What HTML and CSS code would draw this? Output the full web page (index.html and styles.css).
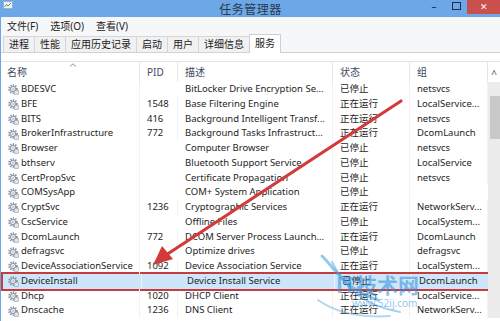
FILE: index.html
```html
<!DOCTYPE html>
<html lang="zh-CN">
<head>
  <meta charset="UTF-8">
  <title>任务管理器</title>
  <link rel="stylesheet" href="styles.css">
</head>
<body>
  <svg class="defs" width="0" height="0">
    <symbol id="gear" viewBox="0 0 12 12">
      <circle cx="6" cy="6" r="3.7" fill="none" stroke="#8b939c" stroke-width="2.2" stroke-dasharray="1.3 1.1"/>
      <circle cx="6" cy="6" r="2.6" fill="#eef1f4" stroke="#78818b" stroke-width="0.8"/>
      <circle cx="6" cy="6" r="1" fill="#a7c4dc"/>
      <rect x="7.5" y="7.5" width="4" height="4" fill="#dce6ef" stroke="#8aa2b8" stroke-width="0.6"/>
    </symbol>
  </svg>

  <div class="window">
    <div class="titlebar">
      <svg class="appicon" viewBox="0 0 10 8">
        <rect x="0.5" y="0.5" width="9" height="7" fill="#e9f1fa" stroke="#9bb3cc"/>
        <polyline points="1.5,6 3.5,3.5 5,5 8,2" fill="none" stroke="#4f8a3c" stroke-width="0.9"/>
      </svg>
      <span class="title">任务管理器</span>
      <div class="controls">
        <span class="ctl">–</span>
        <span class="ctl box"></span>
        <span class="close">✕</span>
      </div>
    </div>

    <div class="menubar">
      <span>文件(F)</span>
      <span>选项(O)</span>
      <span>查看(V)</span>
    </div>

    <div class="tabs">
      <span class="tab">进程</span>
      <span class="tab">性能</span>
      <span class="tab">应用历史记录</span>
      <span class="tab">启动</span>
      <span class="tab">用户</span>
      <span class="tab">详细信息</span>
      <span class="tab active">服务</span>
    </div>

    <div class="panel">
      <div class="list">
        <div class="row head">
          <span class="c name">名称<svg class="sort" viewBox="0 0 8 4"><polyline points="1,3.5 4,0.8 7,3.5" fill="none" stroke="#8d97a3" stroke-width="1"/></svg></span>
          <span class="c">PID</span>
          <span class="c">描述</span>
          <span class="c">状态</span>
          <span class="c">组</span>
        </div>
        <div class="row"><span class="c name"><svg class="ico"><use href="#gear"/></svg>BDESVC</span><span class="c"></span><span class="c">BitLocker Drive Encryption Se...</span><span class="c">已停止</span><span class="c">netsvcs</span></div>
        <div class="row"><span class="c name"><svg class="ico"><use href="#gear"/></svg>BFE</span><span class="c">1548</span><span class="c">Base Filtering Engine</span><span class="c">正在运行</span><span class="c">LocalService...</span></div>
        <div class="row"><span class="c name"><svg class="ico"><use href="#gear"/></svg>BITS</span><span class="c">416</span><span class="c">Background Intelligent Transf...</span><span class="c">正在运行</span><span class="c">netsvcs</span></div>
        <div class="row"><span class="c name"><svg class="ico"><use href="#gear"/></svg>BrokerInfrastructure</span><span class="c">772</span><span class="c">Background Tasks Infrastruct...</span><span class="c">正在运行</span><span class="c">DcomLaunch</span></div>
        <div class="row"><span class="c name"><svg class="ico"><use href="#gear"/></svg>Browser</span><span class="c"></span><span class="c">Computer Browser</span><span class="c">已停止</span><span class="c">netsvcs</span></div>
        <div class="row"><span class="c name"><svg class="ico"><use href="#gear"/></svg>bthserv</span><span class="c"></span><span class="c">Bluetooth Support Service</span><span class="c">已停止</span><span class="c">LocalService</span></div>
        <div class="row"><span class="c name"><svg class="ico"><use href="#gear"/></svg>CertPropSvc</span><span class="c"></span><span class="c">Certificate Propagation</span><span class="c">已停止</span><span class="c">netsvcs</span></div>
        <div class="row"><span class="c name"><svg class="ico"><use href="#gear"/></svg>COMSysApp</span><span class="c"></span><span class="c">COM+ System Application</span><span class="c">已停止</span><span class="c"></span></div>
        <div class="row"><span class="c name"><svg class="ico"><use href="#gear"/></svg>CryptSvc</span><span class="c">1236</span><span class="c">Cryptographic Services</span><span class="c">正在运行</span><span class="c">NetworkServ...</span></div>
        <div class="row"><span class="c name"><svg class="ico"><use href="#gear"/></svg>CscService</span><span class="c"></span><span class="c">Offline Files</span><span class="c">已停止</span><span class="c">LocalSystem...</span></div>
        <div class="row"><span class="c name"><svg class="ico"><use href="#gear"/></svg>DcomLaunch</span><span class="c">772</span><span class="c">DCOM Server Process Launch...</span><span class="c">正在运行</span><span class="c">DcomLaunch</span></div>
        <div class="row"><span class="c name"><svg class="ico"><use href="#gear"/></svg>defragsvc</span><span class="c"></span><span class="c">Optimize drives</span><span class="c">已停止</span><span class="c">defragsvc</span></div>
        <div class="row"><span class="c name"><svg class="ico"><use href="#gear"/></svg>DeviceAssociationService</span><span class="c">1092</span><span class="c">Device Association Service</span><span class="c">正在运行</span><span class="c">LocalSystem...</span></div>
        <div class="row selected"><span class="c name"><svg class="ico"><use href="#gear"/></svg>DeviceInstall</span><span class="c"></span><span class="c">Device Install Service</span><span class="c">已停止</span><span class="c">DcomLaunch</span></div>
        <div class="row"><span class="c name"><svg class="ico"><use href="#gear"/></svg>Dhcp</span><span class="c">1020</span><span class="c">DHCP Client</span><span class="c">正在运行</span><span class="c">LocalService...</span></div>
        <div class="row"><span class="c name"><svg class="ico"><use href="#gear"/></svg>Dnscache</span><span class="c">1236</span><span class="c">DNS Client</span><span class="c">正在运行</span><span class="c">NetworkServ...</span></div>
      </div>
      <div class="scrollbar">
        <span class="up">^</span>
        <div class="track"><div class="thumb"></div></div>
      </div>
    </div>

    <!-- red arrow + site watermark drawn over the list -->
    <svg class="overlay" viewBox="0 0 500 321">
      <line x1="401" y1="101" x2="166" y2="255" stroke="#d23a3c" stroke-width="3.2" stroke-linecap="round"/>
      <polygon points="153,265 162,246 173,259" fill="#d23a3c"/>
      <g class="mark" fill="none" stroke="#3d9be0" stroke-linecap="round">
        <path d="M322 256 C338 272 346 290 378 300" stroke-width="3" opacity="0.55"/>
        <path d="M332 262 C344 285 360 305 400 312" stroke-width="2" opacity="0.45"/>
        <path d="M318 300 C335 312 360 318 390 316" stroke-width="2" opacity="0.4"/>
      </g>
      <text x="336" y="293" class="mark-title">IT技术网</text>
      <text x="352" y="307" class="mark-url">www.52ij.com</text>
    </svg>
  </div>
</body>
</html>
```

FILE: styles.css
```css
html, body {
  margin: 0;
  padding: 0;
}

body {
  width: 500px;
  height: 321px;
  overflow: hidden;
  background: #ffffff;
  font-family: "Noto Sans", "Noto Sans CJK SC", sans-serif;
  font-size: 10px;
  color: #1e1e1e;
}

.defs {
  position: absolute;
}

.window {
  position: relative;
  height: 321px;
  border-left: 1px solid #6ea7e6;
  box-sizing: border-box;
}

/* title bar */
.titlebar {
  height: 17px;
  background: #6ca8e8;
  display: grid;
  grid-template-columns: 1fr auto 1fr;
  align-items: center;
}

.appicon {
  width: 10px;
  height: 8px;
  margin-left: 2px;
  align-self: start;
  margin-top: 1px;
}

.title {
  font-family: "Noto Sans CJK SC", sans-serif;
  font-size: 12px;
  color: #2b3a4a;
  letter-spacing: 0.5px;
  line-height: 17px;
}

.controls {
  justify-self: end;
  display: flex;
  align-items: flex-start;
  height: 17px;
}

.ctl {
  width: 22px;
  text-align: center;
  color: #1f2f40;
  font-size: 10px;
  line-height: 12px;
}

.ctl.box::before {
  content: "";
  display: inline-block;
  width: 7px;
  height: 6px;
  border: 1px solid #1f2f40;
  margin-top: 2px;
}

.close {
  width: 33px;
  height: 14px;
  background: #c9504c;
  color: #ffffff;
  text-align: center;
  font-size: 9px;
  line-height: 14px;
}

/* menu */
.menubar {
  height: 16px;
  background: #f6f7f8;
  display: flex;
  gap: 12px;
  padding-left: 6px;
  align-items: center;
  color: #222222;
}

/* tabs */
.tabs {
  height: 19px;
  display: flex;
  align-items: flex-end;
  padding-left: 2px;
  background: #f6f7f8;
  border-bottom: 1px solid #d2d2d2;
}

.tab {
  height: 15px;
  line-height: 15px;
  padding: 0 5px;
  background: #f1f1f1;
  border: 1px solid #d6d6d6;
  border-bottom: none;
  margin-right: -1px;
  color: #222222;
}

.tab.active {
  height: 18px;
  line-height: 17px;
  background: #ffffff;
  margin-bottom: -1px;
  border-color: #cfcfcf;
}

/* service list */
.panel {
  display: flex;
  padding-top: 8px;
  background: #ffffff;
}

.list {
  width: 487px;
  font-size: 9.5px;
}

.row {
  display: grid;
  grid-template-columns: 139px 38px 155px 77px 78px;
  height: 14.75px;
  align-items: center;
}

.row.head {
  height: 21px;
  border-top: 1px solid #e3e3e3;
  box-sizing: border-box;
  color: #3c4a5c;
  font-size: 10px;
}

.row.head .c {
  height: 20px;
  line-height: 20px;
  border-right: 1px solid #e6e6e6;
}

.c {
  padding-left: 7px;
  white-space: nowrap;
  overflow: hidden;
  line-height: 14.75px;
  border-right: 1px solid #f2f2f2;
}

.c.name {
  padding-left: 6px;
  display: flex;
  align-items: center;
  position: relative;
}

.row.head .c.name {
  display: block;
  overflow: visible;
}

.sort {
  position: absolute;
  left: 68px;
  top: 1px;
  width: 8px;
  height: 4px;
}

.ico {
  width: 12px;
  height: 12px;
  margin-right: 2px;
  flex: none;
}

.row.selected {
  background: #cde6fb;
  outline: 2px solid #c63b3e;
  outline-offset: 0;
  margin-left: 2px;
  margin-right: -3px;
}

.row.selected .c.name {
  padding-left: 4px;
}

/* scrollbar */
.scrollbar {
  width: 13px;
  display: flex;
  flex-direction: column;
}

.up {
  height: 21px;
  line-height: 24px;
  text-align: center;
  font-size: 10px;
  color: #555555;
  border-top: 1px solid #e3e3e3;
  box-sizing: border-box;
}

.track {
  flex: 1;
  background: #ececec;
  padding-top: 14px;
}

.thumb {
  margin-left: 2px;
  height: 43px;
  background: #c9c9c9;
}

/* overlay */
.overlay {
  position: absolute;
  left: -1px;
  top: 0;
  width: 500px;
  height: 321px;
  pointer-events: none;
}

.mark-title {
  font-family: "Noto Sans CJK SC", sans-serif;
  font-size: 21px;
  font-weight: 700;
  fill: #2f8fdc;
  opacity: 0.55;
}

.mark-url {
  font-family: "Noto Sans", sans-serif;
  font-size: 10px;
  fill: #4aa3e6;
  opacity: 0.6;
}
```
